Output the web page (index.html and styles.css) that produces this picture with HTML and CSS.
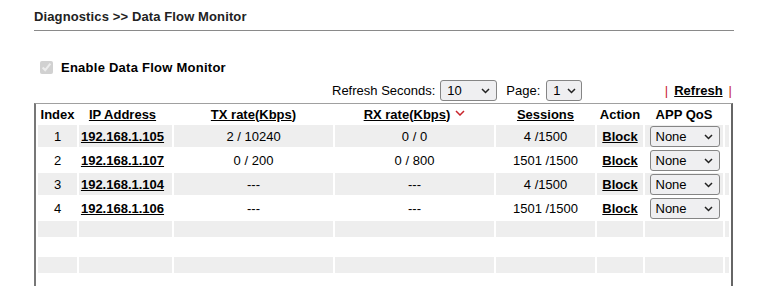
FILE: index.html
```html
<!DOCTYPE html>
<html lang="en">
<head>
    <meta charset="UTF-8">
    <title>Data Flow Monitor</title>
    <link rel="stylesheet" href="styles.css">
</head>
<body>
    <div class="page">
        <div class="title">Diagnostics &gt;&gt; Data Flow Monitor</div>

        <label class="enable">
            <input type="checkbox" checked disabled>
            <span>Enable Data Flow Monitor</span>
        </label>

        <div class="toolbar">
            <span>Refresh Seconds:</span>
            <span class="pick pick-sec">
                <select><option>10</option><option>15</option><option>30</option></select>
                <svg class="chev" width="9" height="6" viewBox="0 0 9 6"><path d="M1 1l3.5 3.5L8 1" fill="none" stroke="#222" stroke-width="1.5"/></svg>
            </span>
            <span class="page-label">Page:</span>
            <span class="pick pick-page">
                <select><option>1</option></select>
                <svg class="chev" width="9" height="6" viewBox="0 0 9 6"><path d="M1 1l3.5 3.5L8 1" fill="none" stroke="#222" stroke-width="1.5"/></svg>
            </span>
            <span class="refresh-links">
                <span class="bar">|</span>
                <a href="#">Refresh</a>
                <span class="bar">|</span>
            </span>
        </div>

        <table class="flow">
            <colgroup>
                <col style="width:39px">
                <col style="width:93px">
                <col style="width:159px">
                <col style="width:159px">
                <col style="width:99px">
                <col style="width:46px">
                <col style="width:78px">
                <col style="width:4px">
            </colgroup>
            <thead>
                <tr>
                    <th>Index</th>
                    <th class="ip"><a href="#">IP Address</a></th>
                    <th><a href="#">TX rate</a>(<a href="#">Kbps</a>)</th>
                    <th><a href="#">RX rate</a>(<a href="#">Kbps</a>)<svg class="sort" width="10" height="6" viewBox="0 0 10 6"><path d="M1 1l4 4L9 1" fill="none" stroke="#c8242b" stroke-width="1.5"/></svg></th>
                    <th><a href="#">Sessions</a></th>
                    <th>Action</th>
                    <th>APP QoS</th>
                    <th></th>
                </tr>
            </thead>
            <tbody id="flowRows"></tbody>
        </table>
    </div>

    <script>
        // Hosts currently tracked by the monitor
        const hosts = [
            { ip: '192.168.1.105', tx: '2 / 10240', rx: '0 / 0', sessions: '4 /1500' },
            { ip: '192.168.1.107', tx: '0 / 200', rx: '0 / 800', sessions: '1501 /1500' },
            { ip: '192.168.1.104', tx: '---', rx: '---', sessions: '4 /1500' },
            { ip: '192.168.1.106', tx: '---', rx: '---', sessions: '1501 /1500' }
        ];

        const chevron = '<svg class="chev" width="9" height="6" viewBox="0 0 9 6"><path d="M1 1l3.5 3.5L8 1" fill="none" stroke="#222" stroke-width="1.5"/></svg>';
        const tbody = document.getElementById('flowRows');

        hosts.forEach((host, i) => {
            const row = document.createElement('tr');
            row.className = i % 2 === 0 ? 'shade' : '';
            row.innerHTML =
                '<td>' + (i + 1) + '</td>' +
                '<td class="ip"><a href="#">' + host.ip + '</a></td>' +
                '<td>' + host.tx + '</td>' +
                '<td>' + host.rx + '</td>' +
                '<td>' + host.sessions + '</td>' +
                '<td><a href="#">Block</a></td>' +
                '<td><span class="pick pick-qos"><select><option>None</option></select>' + chevron + '</span></td>' +
                '<td></td>';
            tbody.appendChild(row);
        });

        // Pad the table with blank rows
        for (let i = hosts.length; i < 8; i++) {
            const row = document.createElement('tr');
            row.className = 'blank' + (i % 2 === 0 ? ' shade' : '');
            row.innerHTML = '<td></td><td></td><td></td><td></td><td></td><td></td><td></td><td></td>';
            tbody.appendChild(row);
        }
    </script>
</body>
</html>
```

FILE: styles.css
```css
body {
    margin: 0;
    font-family: "Liberation Sans", Arial, sans-serif;
    font-size: 13px;
    color: #000;
    background-color: #fff;
}
a {
    color: #000;
    font-weight: bold;
    text-decoration: underline;
}
.page {
    width: 700px;
    margin-left: 34px;
}
.title {
    box-sizing: border-box;
    height: 31px;
    padding-top: 9px;
    line-height: 15px;
    font-weight: bold;
    letter-spacing: 0.12px;
    color: #222;
    border-bottom: 1px solid #8a8a8a;
}
.enable {
    display: flex;
    align-items: center;
    height: 20px;
    margin-top: 26px;
    padding-left: 6px;
    font-weight: bold;
    letter-spacing: 0.25px;
}
.enable input {
    width: 13px;
    height: 13px;
    margin: 0 8px 0 0;
}
.toolbar {
    display: flex;
    align-items: center;
    height: 21px;
    margin-top: 3px;
    padding-left: 298px;
    padding-right: 2px;
}
.page-label {
    margin-left: 9px;
}
.pick {
    position: relative;
    display: inline-block;
    height: 21px;
}
.pick select {
    appearance: none;
    -webkit-appearance: none;
    box-sizing: border-box;
    width: 100%;
    height: 21px;
    margin: 0;
    padding: 0 0 0 6px;
    font-family: "Liberation Sans", Arial, sans-serif;
    font-size: 13px;
    color: #000;
    background-color: #efeff1;
    border: 1px solid #858585;
    border-radius: 3px;
}
.pick .chev {
    position: absolute;
    right: 7px;
    top: 8px;
    pointer-events: none;
}
.pick-sec {
    width: 57px;
    margin-left: 5px;
}
.pick-page {
    width: 36px;
    margin-left: 6px;
}
.pick-page .chev {
    right: 6px;
}
.refresh-links {
    margin-left: auto;
    display: flex;
    gap: 6px;
}
.bar {
    color: #c8242b;
}
.flow {
    table-layout: fixed;
    width: 699px;
    margin-top: 2px;
    border-collapse: separate;
    border-spacing: 2px;
    border-top: 1px solid #a0a0a0;
    border-left: 2px solid #777;
    border-right: 2px solid #666;
    border-bottom: 0;
}
.flow th,
.flow td {
    padding: 0;
    text-align: center;
    vertical-align: middle;
    white-space: nowrap;
    overflow: hidden;
}
.flow th {
    height: 17px;
    font-weight: bold;
}
.flow td {
    height: 22px;
}
.flow .ip {
    padding-right: 6px;
}
.flow .sort {
    margin-left: 5px;
    vertical-align: 3px;
}
.flow tr.shade td {
    background-color: #eeeeee;
}
.flow tr.blank td {
    height: 16px;
}
.pick-qos {
    width: 70px;
    margin-left: 1px;
    vertical-align: middle;
}
.pick-qos select {
    padding-left: 5px;
}
```
